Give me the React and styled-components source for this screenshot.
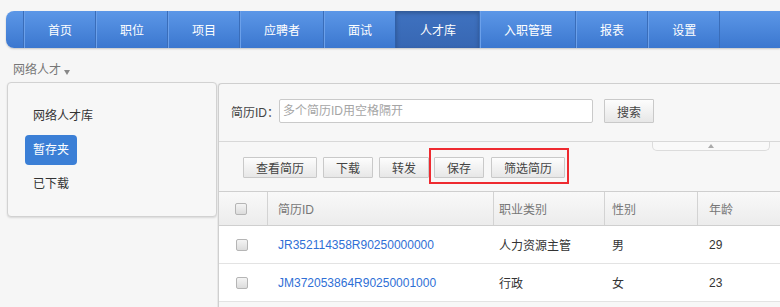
import React from "react";
import styled, { createGlobalStyle } from "styled-components";

const Global = createGlobalStyle`
  html, body { margin: 0; padding: 0; }
  body {
    background: #f6f6f6;
    font-family: "Liberation Sans", "Noto Sans CJK SC", sans-serif;
    font-size: 12px;
    color: #333;
    overflow: hidden;
  }
  * { box-sizing: border-box; }
`;

const Page = styled.div`
  padding-top: 11px;
  width: 780px;
  height: 307px;
  overflow: hidden;
`;

const Nav = styled.nav`
  margin-left: 6px;
  height: 37px;
  display: flex;
  border-radius: 8px 0 0 8px;
  background: linear-gradient(#5c97e7, #3b77cf);
  box-shadow: 0 1px 2px rgba(0, 0, 0, 0.2);
  padding-left: 17px;
`;

const NavItem = styled.div`
  height: 37px;
  padding: 0 23px 0 24px;
  display: flex;
  align-items: center;
  color: #fff;
  font-size: 12px;
  border-left: 1px solid ${(p) => (p.$active ? "#2f5fa8" : "#3a6db9")};
  box-shadow: inset 1px 0 0 #6ba0ea;
  background: transparent;
  ${(p) =>
    p.$active &&
    `
    background: linear-gradient(#3f72c0, #3767b3);
    box-shadow: inset 0 2px 4px rgba(0,0,0,0.25);
  `}
  &:last-child {
    border-right: 1px solid #3a6db9;
  }
`;

const Crumb = styled.div`
  margin-top: 14px;
  padding-left: 13px;
  line-height: 16px;
  color: #777;
  display: flex;
  align-items: center;
  gap: 3px;
`;

const Caret = styled.span`
  display: inline-block;
  width: 0;
  height: 0;
  border-left: 3.5px solid transparent;
  border-right: 3.5px solid transparent;
  border-top: 5px solid #888;
  margin-top: 4px;
`;

const Main = styled.div`
  margin-top: 4px;
  display: flex;
  align-items: flex-start;
  padding-left: 7px;
`;

const Side = styled.div`
  width: 210px;
  height: 135px;
  flex: none;
  background: #f7f7f7;
  border: 1px solid #d2d2d2;
  border-radius: 4px;
  box-shadow: 0 1px 2px rgba(0, 0, 0, 0.12);
  padding: 18px 0 0 17px;
  display: flex;
  flex-direction: column;
  gap: 4px;
  margin-right: 1px;
`;

const SideItem = styled.div`
  align-self: flex-start;
  height: 30px;
  line-height: 30px;
  padding: 0 8px;
  font-size: 12px;
  border-radius: 4px;
  color: ${(p) => (p.$active ? "#fff" : "#333")};
  background: ${(p) => (p.$active ? "#3b7fd6" : "transparent")};
`;

const Content = styled.div`
  flex: 1;
  margin-top: 1px;
  border-left: 1px solid #cfcfcf;
  border-top: 1px solid #cfcfcf;
  border-top-left-radius: 4px;
  box-shadow: -1px 0 0 #e8e8e8;
  background: #f7f7f7;
  min-height: 230px;
`;

const SearchRow = styled.div`
  display: flex;
  align-items: center;
  padding: 15px 0 18px 12px;
  border-bottom: 1px solid #d8d8d8;
`;

const Label = styled.span`
  color: #444;
  white-space: nowrap;
  font-family: "Noto Sans CJK SC", sans-serif;
`;

const LabelLatin = styled.span`
  font-family: "Liberation Sans", sans-serif;
`;

const Input = styled.input`
  width: 314px;
  height: 24px;
  border: 1px solid #cacaca;
  border-radius: 2px;
  background: #fff;
  padding: 0 3px;
  font: inherit;
  color: #333;
  outline: none;
  &::placeholder {
    color: #a5a5a5;
  }
`;

const Btn = styled.button`
  height: ${(p) => (p.$tall ? "24px" : "21px")};
  padding: 0 12px;
  margin-left: ${(p) => p.$ml || 0}px;
  border: 1px solid #c9c9c9;
  border-radius: 1px;
  background: linear-gradient(#fdfdfd, #e7e7e7);
  font: inherit;
  font-size: 12px;
  color: #444;
  white-space: nowrap;
`;

const ToolRow = styled.div`
  position: relative;
  display: flex;
  align-items: flex-start;
  gap: 6px;
  padding: 15px 0 13px 24px;
`;

const Collapse = styled.div`
  position: absolute;
  top: 0;
  right: 10px;
  width: 118px;
  height: 9px;
  border: 1px solid #dcdcdc;
  border-top: none;
  border-radius: 0 0 5px 5px;
  background: #f9f9f9;
  display: flex;
  justify-content: center;
  align-items: center;
  &::after {
    content: "";
    width: 0;
    height: 0;
    border-left: 3px solid transparent;
    border-right: 3px solid transparent;
    border-bottom: 4px solid #aaa;
  }
`;

const Mark = styled.div`
  display: flex;
  gap: 7px;
  border: 2px solid #ee2a30;
  padding: 7px 2px 4px 3px;
  margin: -9px 0 -6px -6px;
`;

const Table = styled.div`
  border-top: 1px solid #cfcfcf;
  background: #fff;
`;

const cols = "49px 226px 111px 93px 1fr";

const Head = styled.div`
  display: grid;
  grid-template-columns: ${cols};
  height: 34px;
  background: linear-gradient(#f9f9f9, #ececec);
  border-bottom: 1px solid #cfcfcf;
`;

const HCell = styled.div`
  display: flex;
  align-items: center;
  justify-content: ${(p) => (p.$center ? "center" : "flex-start")};
  padding-left: ${(p) => (p.$center ? 0 : p.$pl || 10)}px;
  border-right: 1px solid #d3d3d3;
  color: #777;
  &:last-child {
    border-right: none;
  }
`;

const Row = styled.div`
  display: grid;
  grid-template-columns: ${cols};
  height: 38px;
  border-bottom: 1px solid #e3e3e3;
  background: #fff;
`;

const Cell = styled.div`
  display: flex;
  align-items: center;
  justify-content: ${(p) => (p.$center ? "center" : "flex-start")};
  padding-left: ${(p) => (p.$center ? 0 : p.$pl || 10)}px;
  color: ${(p) => (p.$link ? "#2f6fd6" : "#333")};
  font-size: 12px;
`;

const Check = styled.span`
  width: 12px;
  height: 12px;
  border: 1px solid #b5b5b5;
  border-radius: 2px;
  background: linear-gradient(#f4f4f4, #dcdcdc);
  margin-left: -4px;
`;

const navItems = ["首页", "职位", "项目", "应聘者", "面试", "人才库", "入职管理", "报表", "设置"];

const rows = [
  { id: "JR352114358R90250000000", job: "人力资源主管", sex: "男", age: "29" },
  { id: "JM372053864R90250001000", job: "行政", sex: "女", age: "23" },
];

export default function App() {
  return (
    <Page>
      <Global />
      <Nav>
        {navItems.map((n) => (
          <NavItem key={n} $active={n === "人才库"}>
            {n}
          </NavItem>
        ))}
      </Nav>
      <Crumb>
        网络人才 <Caret />
      </Crumb>
      <Main>
        <Side>
          <SideItem>网络人才库</SideItem>
          <SideItem $active>暂存夹</SideItem>
          <SideItem>已下载</SideItem>
        </Side>
        <Content>
          <SearchRow>
            <Label>
              简历<LabelLatin>ID</LabelLatin>：
            </Label>
            <Input placeholder="多个简历ID用空格隔开" />
            <Btn $tall $ml={11}>搜索</Btn>
          </SearchRow>
          <ToolRow>
            <Collapse />
            <Btn>查看简历</Btn>
            <Btn>下载</Btn>
            <Btn>转发</Btn>
            <Mark>
              <Btn>保存</Btn>
              <Btn>筛选简历</Btn>
            </Mark>
          </ToolRow>
          <Table>
            <Head>
              <HCell $center>
                <Check />
              </HCell>
              <HCell>简历ID</HCell>
              <HCell $pl={5}>职业类别</HCell>
              <HCell $pl={7}>性别</HCell>
              <HCell $pl={11}>年龄</HCell>
            </Head>
            {rows.map((r) => (
              <Row key={r.id}>
                <Cell $center>
                  <Check />
                </Cell>
                <Cell $link>{r.id}</Cell>
                <Cell $pl={5}>{r.job}</Cell>
                <Cell $pl={7}>{r.sex}</Cell>
                <Cell $pl={11}>{r.age}</Cell>
              </Row>
            ))}
          </Table>
        </Content>
      </Main>
    </Page>
  );
}
